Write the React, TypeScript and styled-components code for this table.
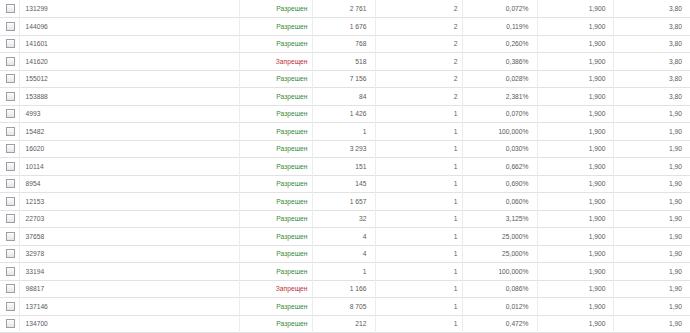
import styled, { createGlobalStyle } from 'styled-components';

const GlobalStyle = createGlobalStyle`
  html, body {
    margin: 0;
    padding: 0;
    background: #fff;
    overflow: hidden;
  }
`;

const Table = styled.table`
  width: 690px;
  border-collapse: collapse;
  table-layout: fixed;
  font-family: "Liberation Sans", Arial, sans-serif;
  font-size: 6.7px;
  color: #5a5a5a;
`;

const Col = styled.col<{ $w: number }>`
  width: ${(p) => p.$w}px;
`;

const Row = styled.tr`
  height: 17.5px;
  border-bottom: 1px solid #e2e2e2;
`;

const Cell = styled.td<{ $align?: 'left' | 'right' | 'center'; $pad?: number }>`
  padding: 0 ${(p) => p.$pad ?? 8}px 0 ${(p) => (p.$align === 'left' ? 6 : 2)}px;
  text-align: ${(p) => p.$align ?? 'right'};
  border-left: 1px solid #ececec;
  white-space: nowrap;
  overflow: hidden;
  vertical-align: middle;
  &:first-child {
    border-left: none;
  }
`;

const Status = styled.span<{ $ok: boolean }>`
  color: ${(p) => (p.$ok ? '#378a37' : '#c0303a')};
`;

const CheckBox = styled.span`
  display: block;
  width: 7px;
  height: 7px;
  margin: 0 auto;
  border: 1px solid #9aa0a6;
  background: linear-gradient(#fdfdfd, #e6e6e6);
`;

type Item = { id: string; ok: boolean; views: string; n: number; pct: string; rate: string; total: string };

const widths = [19, 220, 73, 63, 87, 75, 76, 77];

const rows: Item[] = [
  { id: '131299', ok: true, views: '2 761', n: 2, pct: '0,072%', rate: '1,900', total: '3,80' },
  { id: '144096', ok: true, views: '1 676', n: 2, pct: '0,119%', rate: '1,900', total: '3,80' },
  { id: '141601', ok: true, views: '768', n: 2, pct: '0,260%', rate: '1,900', total: '3,80' },
  { id: '141620', ok: false, views: '518', n: 2, pct: '0,386%', rate: '1,900', total: '3,80' },
  { id: '155012', ok: true, views: '7 156', n: 2, pct: '0,028%', rate: '1,900', total: '3,80' },
  { id: '153888', ok: true, views: '84', n: 2, pct: '2,381%', rate: '1,900', total: '3,80' },
  { id: '4993', ok: true, views: '1 426', n: 1, pct: '0,070%', rate: '1,900', total: '1,90' },
  { id: '15482', ok: true, views: '1', n: 1, pct: '100,000%', rate: '1,900', total: '1,90' },
  { id: '16020', ok: true, views: '3 293', n: 1, pct: '0,030%', rate: '1,900', total: '1,90' },
  { id: '10114', ok: true, views: '151', n: 1, pct: '0,662%', rate: '1,900', total: '1,90' },
  { id: '8954', ok: true, views: '145', n: 1, pct: '0,690%', rate: '1,900', total: '1,90' },
  { id: '12153', ok: true, views: '1 657', n: 1, pct: '0,060%', rate: '1,900', total: '1,90' },
  { id: '22703', ok: true, views: '32', n: 1, pct: '3,125%', rate: '1,900', total: '1,90' },
  { id: '37658', ok: true, views: '4', n: 1, pct: '25,000%', rate: '1,900', total: '1,90' },
  { id: '32978', ok: true, views: '4', n: 1, pct: '25,000%', rate: '1,900', total: '1,90' },
  { id: '33194', ok: true, views: '1', n: 1, pct: '100,000%', rate: '1,900', total: '1,90' },
  { id: '98817', ok: false, views: '1 166', n: 1, pct: '0,086%', rate: '1,900', total: '1,90' },
  { id: '137146', ok: true, views: '8 705', n: 1, pct: '0,012%', rate: '1,900', total: '1,90' },
  { id: '134700', ok: true, views: '212', n: 1, pct: '0,472%', rate: '1,900', total: '1,90' },
];

const App = () => {
  return (
    <>
      <GlobalStyle />
      <Table>
        <colgroup>
          {widths.map((w, i) => (
            <Col key={i} $w={w} />
          ))}
        </colgroup>
        <tbody>
          {rows.map((r) => (
            <Row key={r.id}>
              <Cell $align="center" $pad={0}>
                <CheckBox />
              </Cell>
              <Cell $align="left">{r.id}</Cell>
              <Cell $pad={4}>
                <Status $ok={r.ok}>{r.ok ? 'Разрешен' : 'Запрещен'}</Status>
              </Cell>
              <Cell>{r.views}</Cell>
              <Cell $pad={4}>{r.n}</Cell>
              <Cell>{r.pct}</Cell>
              <Cell $pad={7}>{r.rate}</Cell>
              <Cell>{r.total}</Cell>
            </Row>
          ))}
        </tbody>
      </Table>
    </>
  );
};

export default App;
